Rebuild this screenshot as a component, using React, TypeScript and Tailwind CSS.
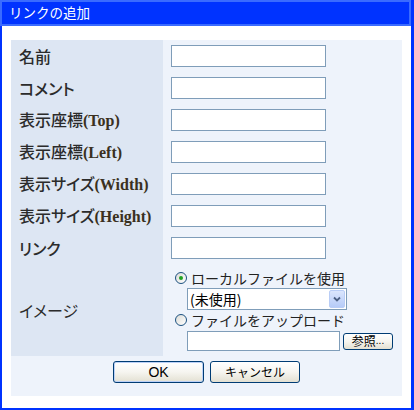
import React from 'react';

const jp = "font-['Noto_Sans_CJK_JP',sans-serif]";

type Field = { label: string; sub?: string };

const fields: Field[] = [
  { label: '名前' },
  { label: 'コメント' },
  { label: '表示座標', sub: '(Top)' },
  { label: '表示座標', sub: '(Left)' },
  { label: '表示サイズ', sub: '(Width)' },
  { label: '表示サイズ', sub: '(Height)' },
  { label: 'リンク' },
];

function Label({ field }: { field: Field }) {
  return (
    <span className="text-[16px] leading-none font-medium text-[#2b2b2b] [font-feature-settings:'palt']">
      {field.label}
      {field.sub && (
        <span className="font-['Liberation_Serif',serif] font-bold text-[#3a3020]">{field.sub}</span>
      )}
    </span>
  );
}

function Radio({ checked }: { checked?: boolean }) {
  return (
    <span className="flex h-[12px] w-[12px] shrink-0 items-center justify-center rounded-full border border-[#1c5180] bg-gradient-to-br from-[#dcdcd7] to-white">
      {checked && <span className="h-[4px] w-[4px] rounded-full bg-[#21a121]" />}
    </span>
  );
}

function XpButton({ children, primary, className }: { children: React.ReactNode; primary?: boolean; className?: string }) {
  return (
    <button
      type="button"
      className={
        'flex items-center justify-center rounded-[3px] border border-[#003c74] bg-gradient-to-b from-white via-[#f6f5f0] to-[#e3e0d2] text-black ' +
        (primary ? 'shadow-[inset_0_0_0_1px_#bcd1f7] ' : '') +
        (className ?? '')
      }
    >
      {children}
    </button>
  );
}

export default function App() {
  return (
    <div className={`flex h-[410px] w-[414px] flex-col border-r-[3px] border-[#0033ff] bg-white ${jp}`}>
      {/* title bar */}
      <div className="flex h-[26px] shrink-0 items-center border-2 border-[#3a6bff] bg-[#0033ff] pl-[7px]">
        <span className="text-[13.5px] leading-none text-white">リンクの追加</span>
      </div>

      <div className="flex flex-1 flex-col border-b-2 border-l-2 border-[#0033ff] px-[9px] pt-[14px]">
        <div className="flex w-[391px] flex-col bg-[#eef3fb]">
          {fields.map((f, i) => (
            <div key={i} className="flex h-[32px]">
              <div className="flex w-[152px] items-center bg-[#dde6f3] pl-[8px]">
                <Label field={f} />
              </div>
              <div className="flex items-center pl-[8px]">
                <input type="text" className="h-[22px] w-[155px] border border-[#7f9db9] bg-white outline-none" />
              </div>
            </div>
          ))}

          {/* image row */}
          <div className="flex h-[92px]">
            <div className="flex w-[152px] items-center bg-[#dde6f3] pl-[8px]">
              <span className="text-[16px] leading-none text-[#2b2b2b] [font-feature-settings:'palt']">イメージ</span>
            </div>
            <div className="flex flex-col pl-[12px] pt-[6px]">
              <div className="flex h-[16px] items-center gap-[4px]">
                <Radio checked />
                <span className="text-[14px] leading-none text-[#222]">ローカルファイルを使用</span>
              </div>
              <div className="ml-[12px] mt-[2px] flex h-[22px] w-[160px] items-center border border-[#7f9db9] bg-white pl-[2px] pr-[1px]">
                <span className="flex-1 text-[14px] leading-none text-black">(未使用)</span>
                <span className="flex h-[18px] w-[16px] items-center justify-center rounded-[2px] border border-[#b9cdf6] bg-gradient-to-b from-[#dbe6fd] to-[#b6cbf8]">
                  <svg width="8" height="6" viewBox="0 0 8 6">
                    <path d="M1 1.5 L4 4.5 L7 1.5" fill="none" stroke="#4d6185" strokeWidth="1.8" />
                  </svg>
                </span>
              </div>
              <div className="mt-[2px] flex h-[16px] items-center gap-[4px]">
                <Radio />
                <span className="text-[14px] leading-none text-[#222]">ファイルをアップロード</span>
              </div>
              <div className="ml-[12px] mt-[3px] flex h-[20px] items-center gap-[3px]">
                <input type="text" className="h-[20px] w-[153px] border border-[#7f9db9] bg-white outline-none" />
                <XpButton className="h-[17px] w-[50px] text-[12px] leading-none">
                  参照<span className="font-['Liberation_Sans',sans-serif] text-[10px]">...</span>
                </XpButton>
              </div>
            </div>
          </div>

          {/* buttons */}
          <div className="flex h-[40px] justify-center gap-[6px] pt-[5px]">
            <XpButton primary className="h-[22px] w-[91px] font-['Liberation_Sans',sans-serif] text-[14px] leading-none">
              OK
            </XpButton>
            <XpButton className="h-[22px] w-[90px] text-[12px] leading-none">キャンセル</XpButton>
          </div>
        </div>
      </div>
    </div>
  );
}
